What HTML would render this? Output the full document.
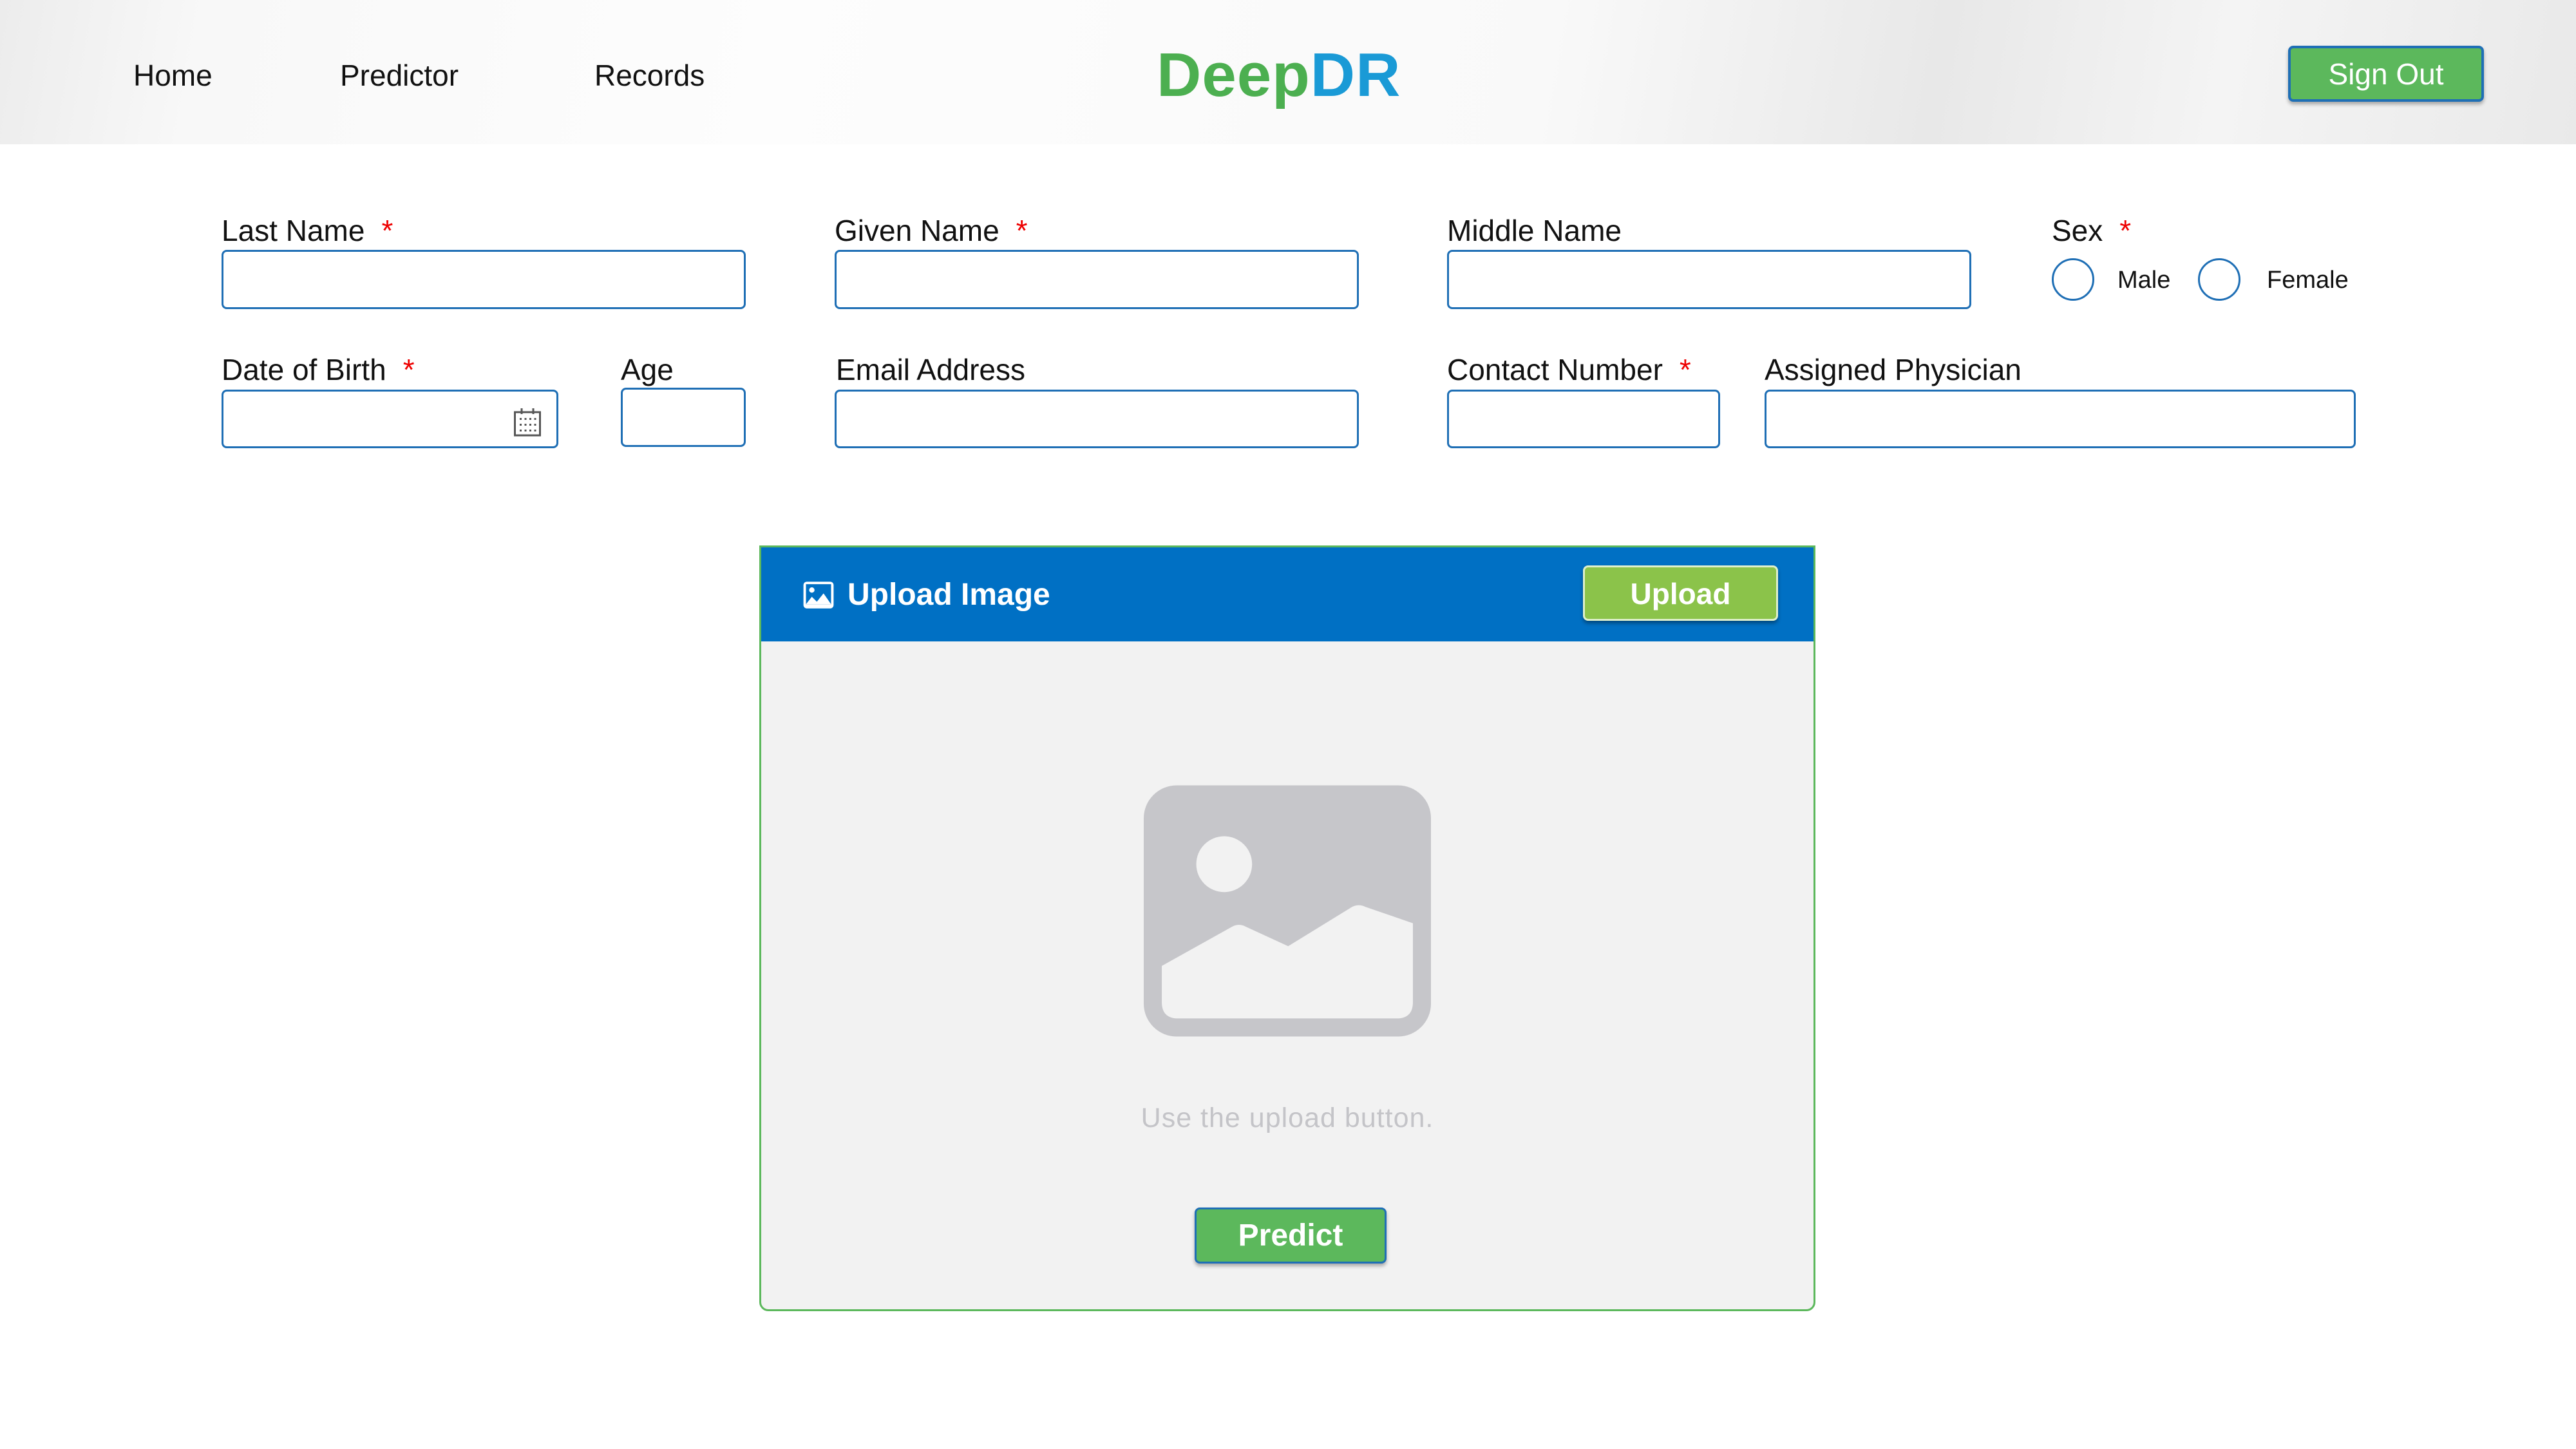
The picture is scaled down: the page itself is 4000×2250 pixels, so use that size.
<!DOCTYPE html>
<html><head><meta charset="utf-8"><style>
*{margin:0;padding:0;box-sizing:border-box}
body{width:4000px;height:2250px;background:#fff;font-family:"Liberation Sans",sans-serif;position:relative;overflow:hidden;color:#111}
.hdr{position:absolute;left:0;top:0;width:4000px;height:224px;background:linear-gradient(100deg,#ececec 0%,#f8f8f8 8%,#fdfdfd 30%,#f9f9f9 60%,#e8e8e8 75%,#f4f4f4 86%,#e9e9e9 100%)}
.nav{position:absolute;top:90px;font-size:46px;color:#111}
.logo{position:absolute;left:1796px;top:62px;font-size:96px;font-weight:bold;letter-spacing:1px}
.btn{position:absolute;color:#fff;font-size:46px;text-align:center;border-radius:8px}
.lbl{position:absolute;font-size:46px;color:#111}
.lbl b{color:#e00;font-weight:normal;margin-left:26px}
.in{position:absolute;border:3px solid #1f6fb5;border-radius:8px;background:#fff}
.radio{position:absolute;width:66px;height:66px;border:3px solid #1f6fb5;border-radius:50%}
.rt{position:absolute;font-size:38px}
</style></head><body>
<div class="hdr"></div>
<div class="nav" style="left:207px">Home</div>
<div class="nav" style="left:528px">Predictor</div>
<div class="nav" style="left:923px">Records</div>
<div class="logo"><span style="color:#4caf50">Deep</span><span style="color:#1a9ad6">DR</span></div>
<div class="btn" style="left:3553px;top:71px;width:304px;height:87px;line-height:81px;background:#5cb85c;border:4px solid #1f6fb5;box-shadow:0 4px 6px rgba(0,0,0,.3)">Sign Out</div>

<div class="lbl" style="left:344px;top:331px">Last Name<b>*</b></div>
<div class="in" style="left:344px;top:388px;width:814px;height:92px"></div>
<div class="lbl" style="left:1296px;top:331px">Given Name<b>*</b></div>
<div class="in" style="left:1296px;top:388px;width:814px;height:92px"></div>
<div class="lbl" style="left:2247px;top:331px">Middle Name</div>
<div class="in" style="left:2247px;top:388px;width:814px;height:92px"></div>
<div class="lbl" style="left:3186px;top:331px">Sex<b>*</b></div>
<div class="radio" style="left:3186px;top:401px"></div>
<div class="rt" style="left:3288px;top:414px">Male</div>
<div class="radio" style="left:3413px;top:401px"></div>
<div class="rt" style="left:3520px;top:414px">Female</div>

<div class="lbl" style="left:344px;top:547px">Date of Birth<b>*</b></div>
<div class="in" style="left:344px;top:605px;width:523px;height:91px">
<svg style="position:absolute;left:448px;top:23px" width="48" height="48" viewBox="0 0 16 16"><rect x="1.5" y="3" width="13" height="12" fill="none" stroke="#555" stroke-width="1"/><path d="M5 1v3M11 1v3" stroke="#555"/><g fill="#555"><rect x="4" y="6" width="1" height="1"/><rect x="6.5" y="6" width="1" height="1"/><rect x="9" y="6" width="1" height="1"/><rect x="11.5" y="6" width="1" height="1"/><rect x="4" y="9" width="1" height="1"/><rect x="6.5" y="9" width="1" height="1"/><rect x="9" y="9" width="1" height="1"/><rect x="11.5" y="9" width="1" height="1"/><rect x="4" y="12" width="1" height="1"/><rect x="6.5" y="12" width="1" height="1"/><rect x="9" y="12" width="1" height="1"/><rect x="11.5" y="12" width="1" height="1"/></g></svg></div>
<div class="lbl" style="left:964px;top:547px">Age</div>
<div class="in" style="left:964px;top:602px;width:194px;height:92px"></div>
<div class="lbl" style="left:1298px;top:547px">Email Address</div>
<div class="in" style="left:1296px;top:605px;width:814px;height:91px"></div>
<div class="lbl" style="left:2247px;top:547px">Contact Number<b>*</b></div>
<div class="in" style="left:2247px;top:605px;width:424px;height:91px"></div>
<div class="lbl" style="left:2740px;top:547px">Assigned Physician</div>
<div class="in" style="left:2740px;top:605px;width:918px;height:91px"></div>

<div style="position:absolute;left:1179px;top:847px;width:1640px;height:1189px;border:3px solid #5cb85c;border-radius:0 0 14px 14px;background:#f2f2f2;overflow:hidden">
<div style="position:absolute;left:0;top:0;width:100%;height:146px;background:#0070c4"></div>
<svg style="position:absolute;left:63px;top:50px" width="52" height="48" viewBox="0 0 20 18"><rect x="1" y="1" width="18" height="16" rx="2" fill="#fff"/><rect x="2.5" y="2.5" width="15" height="12" fill="#0070c4"/><circle cx="6" cy="6" r="1.6" fill="#fff"/><path d="M2.5 14.5L6 10l3 3 4-5 4.5 6.5z" fill="#fff"/></svg>
<div style="position:absolute;left:134px;top:46px;font-size:48px;font-weight:bold;color:#fff">Upload Image</div>
<div class="btn" style="left:1276px;top:28px;width:303px;height:86px;line-height:82px;background:#8bc34a;border:3px solid #dff0cc;font-weight:bold;box-shadow:0 4px 6px rgba(0,0,0,.35)">Upload</div>
<svg style="position:absolute;left:594px;top:369px" width="446" height="391" viewBox="0 0 175 153"><rect x="0" y="0" width="175" height="153" rx="20" fill="#c6c6ca"/><circle cx="49" cy="48" r="17" fill="#f2f2f2"/><path d="M11 110L54 86Q58 84 62 86L88 98L127 74Q131 72 135 74L164 84L164 132Q164 142 154 142L21 142Q11 142 11 132Z" fill="#f2f2f2"/></svg>
<div style="position:absolute;left:0;width:100%;top:862px;text-align:center;font-size:43px;letter-spacing:1px;color:#c4c4c8">Use the upload button.</div>
<div class="btn" style="left:673px;top:1025px;width:298px;height:87px;line-height:81px;background:#5cb85c;border:3px solid #1f6fb5;font-weight:bold;font-size:48px;box-shadow:0 4px 6px rgba(0,0,0,.3)">Predict</div>
</div>
</body></html>
